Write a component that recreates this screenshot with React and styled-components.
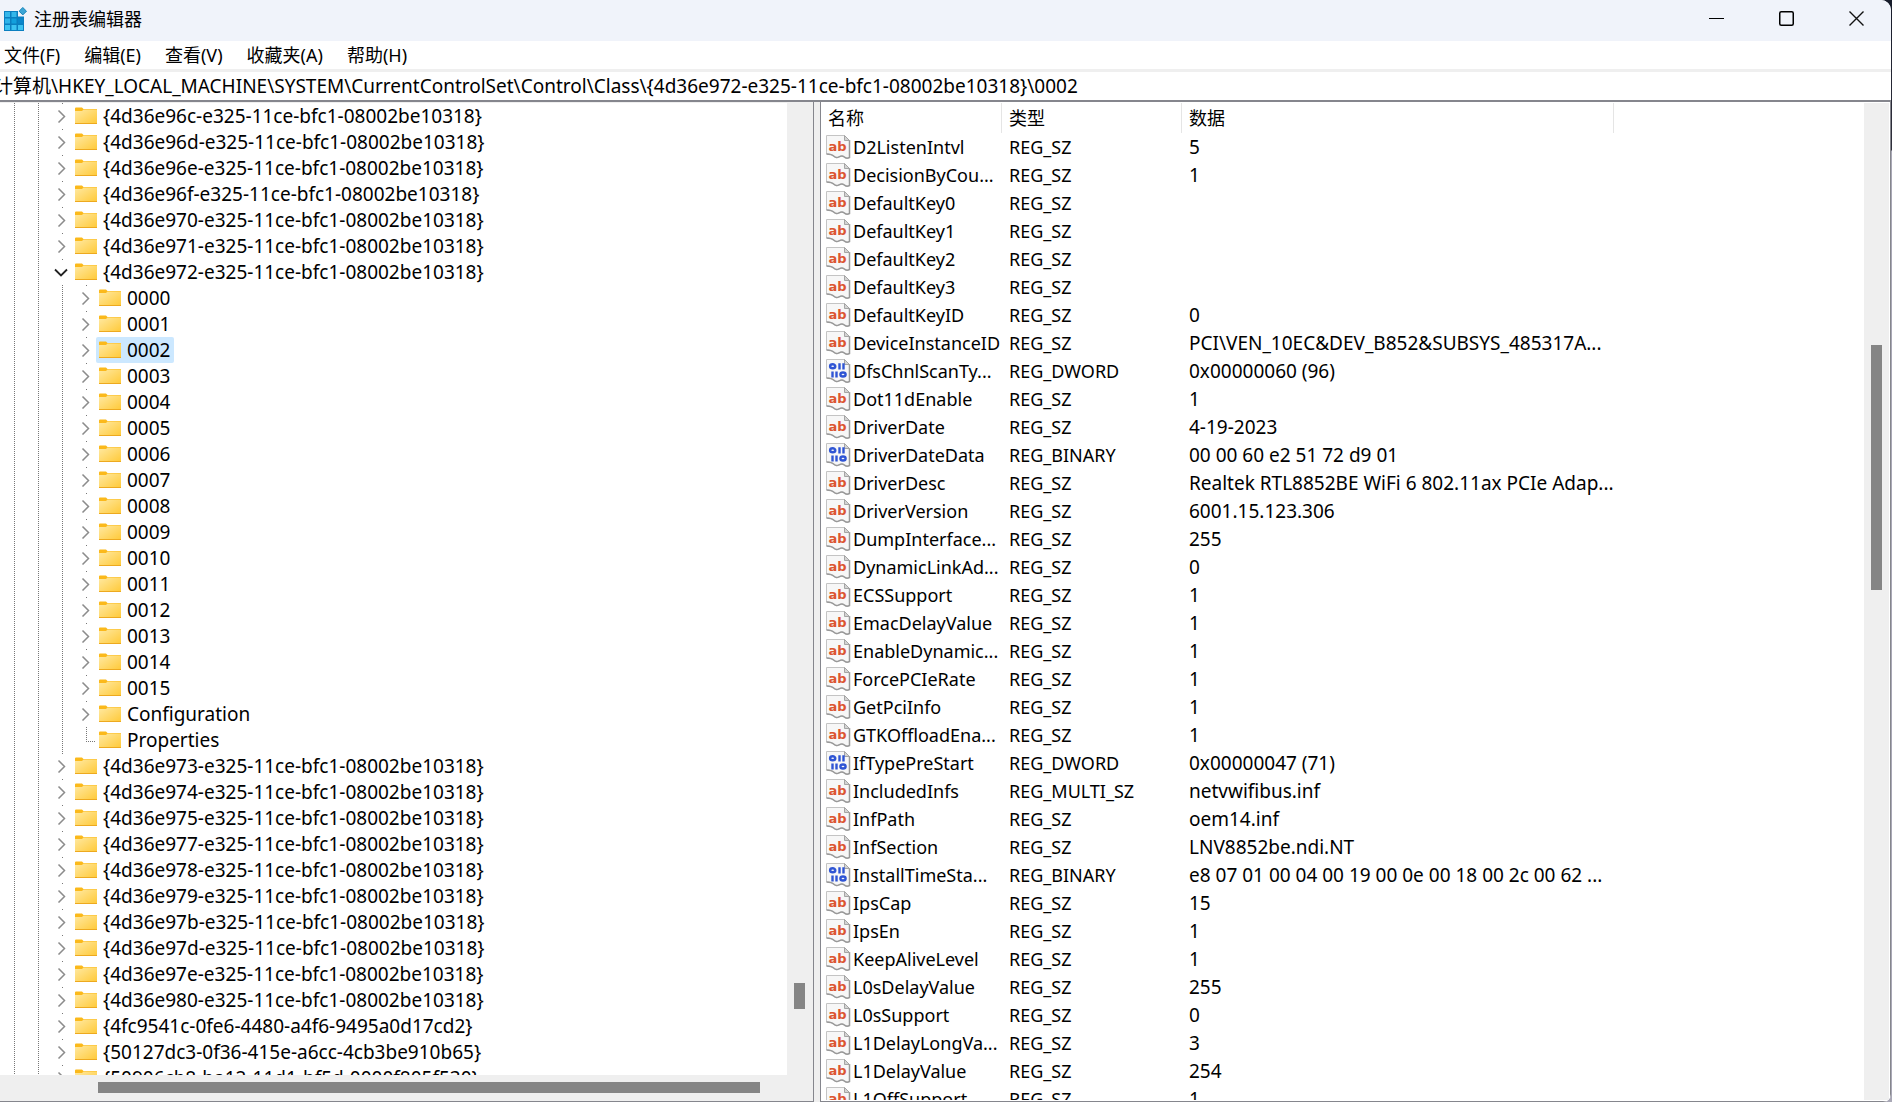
import React from "react";
import styled, { createGlobalStyle } from "styled-components";

const Global = createGlobalStyle`
  * { box-sizing: border-box; }
  body {
    margin: 0;
    background: #fff;
    color: #000;
    font: 18px/24px "Noto Sans", "Noto Sans CJK SC", sans-serif;
  }
  button, input {
    font: inherit;
    color: inherit;
    border: 0;
    padding: 0;
    background: none;
  }
`;

const Desktop = styled.div`
  height: 100vh;
  padding-right: 1px;
  background: linear-gradient(#171c2b 0, #30303c 150px, #a9a8b6 151px);
`;

const Window = styled.div`
  height: 100%;
  display: flex;
  flex-direction: column;
  overflow: hidden;
  background: #efefef;
  border-radius: 0 10px 8px 0;
`;

const TitleBar = styled.header`
  flex: none;
  height: 41px;
  display: flex;
  align-items: center;
  gap: 6px;
  padding: 0 0 4px 4px;
  background: #f0f3fa;
`;

const Title = styled.h1`
  flex: 1;
  margin: 0;
  font-size: 18px;
  font-weight: 400;
`;

const WindowControls = styled.div`
  display: flex;
`;

const WindowButton = styled.button`
  width: 70px;
  height: 37px;
  display: grid;
  place-items: center;
`;

const MenuBar = styled.nav`
  flex: none;
  height: 28px;
  display: flex;
  align-items: center;
  gap: 24px;
  padding-left: 4px;
  background: #fff;
`;

const AddressBar = styled.div`
  flex: none;
  height: 33px;
  display: flex;
  border-top: 3px solid #efefef;
  border-bottom: 2px solid #85868d;
  background: #fff;
`;

const AddressInput = styled.input`
  flex: 1;
  font-size: 19px;
  text-indent: -6px;
  outline: none;
`;

const Panes = styled.main`
  flex: 1;
  min-height: 0;
  display: grid;
  grid-template-columns: minmax(0, 814fr) minmax(0, 1071fr);
  gap: 6px;
`;

const Pane = styled.section`
  min-width: 0;
  min-height: 0;
  display: grid;
  grid-template-columns: minmax(0, 1fr) 25px;
  grid-template-rows: minmax(0, 1fr) ${(p) => (p.$horizontal ? "25px" : "")};
  padding: 1px 1px 1px 0;
  border-right: 1px solid #85868d;
  border-bottom: 1px solid #85868d;
  border-left: ${(p) => (p.$framed ? "1px solid #85868d" : "0")};
  background: ${(p) => (p.$framed ? "#fff" : "#efefef")};
`;

const Viewport = styled.div`
  overflow: hidden;
  background: #fff;
`;

const Track = styled.div`
  display: flex;
  flex-direction: ${(p) => (p.$horizontal ? "row" : "column")};
  padding: ${(p) => (p.$horizontal ? "7px 0" : "0 7px")};
  background: #efefef;
`;

const Spacer = styled.div`
  flex: ${(p) => p.$size} 1 0;
`;

const Thumb = styled.div`
  flex: ${(p) => p.$size} 1 0;
  background: #858585;
`;

const Tree = styled.ul`
  margin: 0;
  padding: 0 0 0 2px;
  list-style: none;
  font-size: 19px;
`;

const TreeRow = styled.li`
  height: 26px;
  display: flex;
`;

const dotsDown = "repeating-linear-gradient(#777 0 1px, transparent 1px 2px)";
const dotsAcross = "repeating-linear-gradient(90deg, #777 0 1px, transparent 1px 2px)";

const Guide = styled.span`
  flex: none;
  width: 24px;
  background: ${dotsDown} 12px 0 / 1px 100% no-repeat;
`;

const Expander = styled.button`
  flex: none;
  width: 22px;
  display: grid;
  place-items: center;
  background: linear-gradient(#777, #777) 12px 0 / 1px 1px no-repeat;
`;

const Elbow = styled.span`
  flex: none;
  width: 22px;
  background:
    ${dotsDown} 12px 0 / 1px 14px no-repeat,
    ${dotsAcross} 12px 14px / 10px 1px no-repeat;
`;

const TreeItem = styled.span`
  display: flex;
  align-items: center;
  gap: 6px;
  padding: 0 4px 0 3px;
  border-radius: 2px;
  white-space: nowrap;
  background: ${(p) => (p.$selected ? "#cce8ff" : "transparent")};
`;

const Table = styled.table`
  width: 100%;
  table-layout: fixed;
  border-collapse: collapse;
`;

const HeadCell = styled.th`
  width: ${(p) => p.$width};
  height: 30px;
  padding: 0 0 0 7px;
  font-weight: 400;
  text-align: left;
  background: ${(p) => (p.$width ? "linear-gradient(#e5e5e5, #e5e5e5) right / 1px 100% no-repeat" : "none")};
`;

const Cell = styled.td`
  height: 28px;
  padding: 0 0 0 ${(p) => (p.$icon ? "5px" : "7px")};
  font-size: ${(p) => (p.$data ? "19px" : "18px")};
  white-space: nowrap;
`;

const ValueName = styled.span`
  display: flex;
  align-items: center;
  gap: 2px;
`;

const Icon = styled.svg`
  flex: none;
  display: block;
`;

function AppIcon() {
  return (
    <Icon width="24" height="24" viewBox="0 0 24 24" aria-hidden="true">
      <path d="M0 4h14v5.500h6V24H0z" fill="#0b7fc0" />
      <path d="M1 5h5v5H1zM7.500 5h5v5h-5z" fill="#35b7ea" />
      <path d="M1 11.500h5v5H1z" fill="#2fb4ea" />
      <path d="M7.500 11.500h5v5h-5z" fill="#12a0dd" />
      <path d="M14 11.500h5v5h-5z" fill="#0a86cb" />
      <path d="M1 18h5v5H1zM7.500 18h5v5h-5zM14 18h5v5h-5z" fill="#3cc3f2" />
      <path d="M18.800.500l3.700 3.700-3.700 3.700-3.700-3.700z" fill="#3ba5d6" stroke="#1684b8" />
    </Icon>
  );
}

function FolderIcon() {
  return (
    <Icon width="22" height="18" viewBox="0 0 22 18" aria-hidden="true">
      <defs>
        <linearGradient id="folder" x1="0" y1="0" x2="1" y2="1">
          <stop offset="0" stopColor="#ffe9a2" />
          <stop offset="1" stopColor="#ffc937" />
        </linearGradient>
      </defs>
      <path d="M0 1.500Q0 .5 1 .5h6L8.500 2H22v2H0z" fill="#fbb91b" />
      <path d="M0 4h7l1.500-1.500H22v14.500H0z" fill="url(#folder)" />
      <path d="M0 16.500h22" stroke="#eda91f" />
    </Icon>
  );
}

function Chevron({ open }) {
  return open ? (
    <Icon width="14" height="14" viewBox="0 0 14 14" fill="none" stroke="#222" strokeWidth="1.800" aria-hidden="true">
      <path d="M1 4.500l6 6 6-6" />
    </Icon>
  ) : (
    <Icon width="14" height="14" viewBox="0 0 14 14" fill="none" stroke="#8c8c8c" strokeWidth="1.500" aria-hidden="true">
      <path d="M4.500 1.500l6 6-6 6" />
    </Icon>
  );
}

function ValueIcon({ binary }) {
  return (
    <Icon width="25" height="24" viewBox="0 0 25 24" aria-hidden="true">
      <path
        d="M.5.500h18l5 5v17c-2 1-4 1-5.500-.5s-3.500-1-5 0-3.500 1-5-.5-3-2.500-7.500-2.500z"
        fill="#f7f7f7"
        stroke="#c4c4c4"
      />
      <path d="M23.500 5v17.500c-2 1-4 .8-5.500-.7s-3.500-.8-5 0-3.500 1-5-.5-3-2.300-7.500-2.300" fill="none" stroke="#999" strokeWidth="1.500" />
      <path d="M18.500.5v5h5z" fill="#d4d4d4" stroke="#a5a5a5" />
      {binary ? (
        <g fill="none" stroke="#2f55d4" strokeWidth="2.400">
          <ellipse cx="6.700" cy="7.300" rx="2.600" ry="2" />
          <path d="M13.500 4.200v6.200M17.500 4.200v6.200M6.500 12.400v6.200M10.500 12.400v6.200" />
          <ellipse cx="17" cy="15.500" rx="2.600" ry="2" />
        </g>
      ) : (
        <text x="11.500" y="15.500" textAnchor="middle" fontFamily="DejaVu Sans, sans-serif" fontSize="13" fontWeight="700" fill="#dc5531">
          ab
        </text>
      )}
    </Icon>
  );
}

const classKey = (id) => `{4d36e${id}-e325-11ce-bfc1-08002be10318}`;

const TREE = [
  ...["96c", "96d", "96e", "96f", "970", "971"].map((id) => ({ name: classKey(id) })),
  { name: classKey("972"), open: true },
  ...Array.from({ length: 16 }, (_, i) => ({
    name: String(i).padStart(4, "0"),
    nested: true,
    selected: i === 2,
  })),
  { name: "Configuration", nested: true },
  { name: "Properties", nested: true, leaf: true },
  ...["973", "974", "975", "977", "978", "979", "97b", "97d", "97e", "980"].map((id) => ({ name: classKey(id) })),
  { name: "{4fc9541c-0fe6-4480-a4f6-9495a0d17cd2}" },
  { name: "{50127dc3-0f36-415e-a6cc-4cb3be910b65}" },
  { name: "{50906cb8-ba12-11d1-bf5d-0000f805f530}" },
];

const VALUES = [
  ["D2ListenIntvl", "REG_SZ", "5"],
  ["DecisionByCou...", "REG_SZ", "1"],
  ["DefaultKey0", "REG_SZ", ""],
  ["DefaultKey1", "REG_SZ", ""],
  ["DefaultKey2", "REG_SZ", ""],
  ["DefaultKey3", "REG_SZ", ""],
  ["DefaultKeyID", "REG_SZ", "0"],
  ["DeviceInstanceID", "REG_SZ", "PCI\\VEN_10EC&DEV_B852&SUBSYS_485317A..."],
  ["DfsChnlScanTy...", "REG_DWORD", "0x00000060 (96)"],
  ["Dot11dEnable", "REG_SZ", "1"],
  ["DriverDate", "REG_SZ", "4-19-2023"],
  ["DriverDateData", "REG_BINARY", "00 00 60 e2 51 72 d9 01"],
  ["DriverDesc", "REG_SZ", "Realtek RTL8852BE WiFi 6 802.11ax PCIe Adap..."],
  ["DriverVersion", "REG_SZ", "6001.15.123.306"],
  ["DumpInterface...", "REG_SZ", "255"],
  ["DynamicLinkAd...", "REG_SZ", "0"],
  ["ECSSupport", "REG_SZ", "1"],
  ["EmacDelayValue", "REG_SZ", "1"],
  ["EnableDynamic...", "REG_SZ", "1"],
  ["ForcePCIeRate", "REG_SZ", "1"],
  ["GetPciInfo", "REG_SZ", "1"],
  ["GTKOffloadEna...", "REG_SZ", "1"],
  ["IfTypePreStart", "REG_DWORD", "0x00000047 (71)"],
  ["IncludedInfs", "REG_MULTI_SZ", "netvwifibus.inf"],
  ["InfPath", "REG_SZ", "oem14.inf"],
  ["InfSection", "REG_SZ", "LNV8852be.ndi.NT"],
  ["InstallTimeSta...", "REG_BINARY", "e8 07 01 00 04 00 19 00 0e 00 18 00 2c 00 62 ..."],
  ["IpsCap", "REG_SZ", "15"],
  ["IpsEn", "REG_SZ", "1"],
  ["KeepAliveLevel", "REG_SZ", "1"],
  ["L0sDelayValue", "REG_SZ", "255"],
  ["L0sSupport", "REG_SZ", "0"],
  ["L1DelayLongVa...", "REG_SZ", "3"],
  ["L1DelayValue", "REG_SZ", "254"],
  ["L1OffSupport", "REG_SZ", "1"],
];

const MENUS = ["文件(F)", "编辑(E)", "查看(V)", "收藏夹(A)", "帮助(H)"];

function ScrollBar({ horizontal, before, size, after }) {
  return (
    <Track $horizontal={horizontal}>
      <Spacer $size={before} />
      <Thumb $size={size} />
      <Spacer $size={after} />
    </Track>
  );
}

export default function App() {
  return (
    <Desktop>
      <Global />
      <Window>
        <TitleBar>
          <AppIcon />
          <Title>注册表编辑器</Title>
          <WindowControls>
            <WindowButton aria-label="最小化">
              <Icon width="15" height="15" stroke="#000">
                <path d="M0 7.500h15" />
              </Icon>
            </WindowButton>
            <WindowButton aria-label="最大化">
              <Icon width="15" height="15" fill="none" stroke="#000" strokeWidth="1.500">
                <rect x=".75" y=".75" width="13.500" height="13.500" rx="1.500" />
              </Icon>
            </WindowButton>
            <WindowButton aria-label="关闭">
              <Icon width="15" height="15" fill="none" stroke="#111" strokeWidth="1.400">
                <path d="M.5.500l14 14M14.500.5l-14 14" />
              </Icon>
            </WindowButton>
          </WindowControls>
        </TitleBar>
        <MenuBar>
          {MENUS.map((m) => (
            <button key={m}>{m}</button>
          ))}
        </MenuBar>
        <AddressBar>
          <AddressInput
            aria-label="地址"
            defaultValue={"计算机\\HKEY_LOCAL_MACHINE\\SYSTEM\\CurrentControlSet\\Control\\Class\\{4d36e972-e325-11ce-bfc1-08002be10318}\\0002"}
          />
        </AddressBar>
        <Panes>
          <Pane $horizontal>
            <Viewport>
              <Tree>
                {TREE.map((node) => (
                  <TreeRow key={node.name}>
                    <Guide />
                    <Guide />
                    {node.nested && <Guide />}
                    {node.leaf ? (
                      <Elbow />
                    ) : (
                      <Expander aria-label={node.name} aria-expanded={!!node.open}>
                        <Chevron open={node.open} />
                      </Expander>
                    )}
                    <TreeItem $selected={node.selected}>
                      <FolderIcon />
                      {node.name}
                    </TreeItem>
                  </TreeRow>
                ))}
              </Tree>
            </Viewport>
            <ScrollBar before={880} size={26} after={66} />
            <ScrollBar horizontal before={98} size={662} after={27} />
          </Pane>
          <Pane $framed>
            <Viewport>
              <Table>
                <thead>
                  <tr>
                    <HeadCell $width="181px">名称</HeadCell>
                    <HeadCell $width="180px">类型</HeadCell>
                    <HeadCell $width="432px">数据</HeadCell>
                    <HeadCell />
                  </tr>
                </thead>
                <tbody>
                  {VALUES.map(([name, type, data]) => (
                    <tr key={name}>
                      <Cell $icon>
                        <ValueName>
                          <ValueIcon binary={type === "REG_DWORD" || type === "REG_BINARY"} />
                          {name}
                        </ValueName>
                      </Cell>
                      <Cell>{type}</Cell>
                      <Cell $data>{data}</Cell>
                    </tr>
                  ))}
                </tbody>
              </Table>
            </Viewport>
            <ScrollBar before={242} size={245} after={510} />
          </Pane>
        </Panes>
      </Window>
    </Desktop>
  );
}
